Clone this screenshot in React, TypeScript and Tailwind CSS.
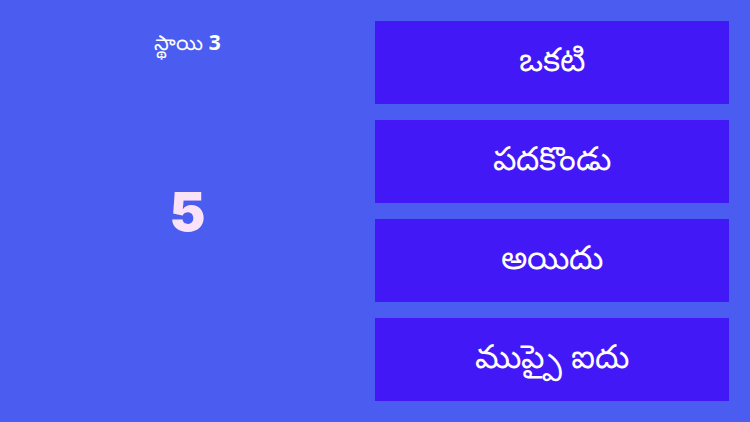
import React from "react";

const options = ["ఒకటి", "పదకొండు", "అయిదు", "ముప్పై ఐదు"];

export default function App() {
  return (
    <div
      className="w-[750px] h-[422px] bg-[#4b5df1] flex overflow-hidden"
      style={{ fontFamily: '"Noto Sans", Inter, sans-serif' }}
    >
      <div className="w-[375px] flex flex-col items-center">
        <div className="mt-[26px] text-white text-[21px] leading-[32px] font-medium">
          స్థాయి <span className="font-bold">3</span>
        </div>
        <div
          className="mt-[124px] text-[#fbe3f7] text-[54px] leading-[60px] font-black"
          style={{ fontFamily: 'Inter, "Noto Sans", sans-serif' }}
        >
          5
        </div>
      </div>
      <div className="w-[354px] flex flex-col gap-[16px] pt-[21px]">
        {options.map((o) => (
          <div
            key={o}
            className="h-[83px] bg-[#4318f6] flex items-center justify-center text-white text-[33px] pb-[8px]"
          >
            {o}
          </div>
        ))}
      </div>
    </div>
  );
}
